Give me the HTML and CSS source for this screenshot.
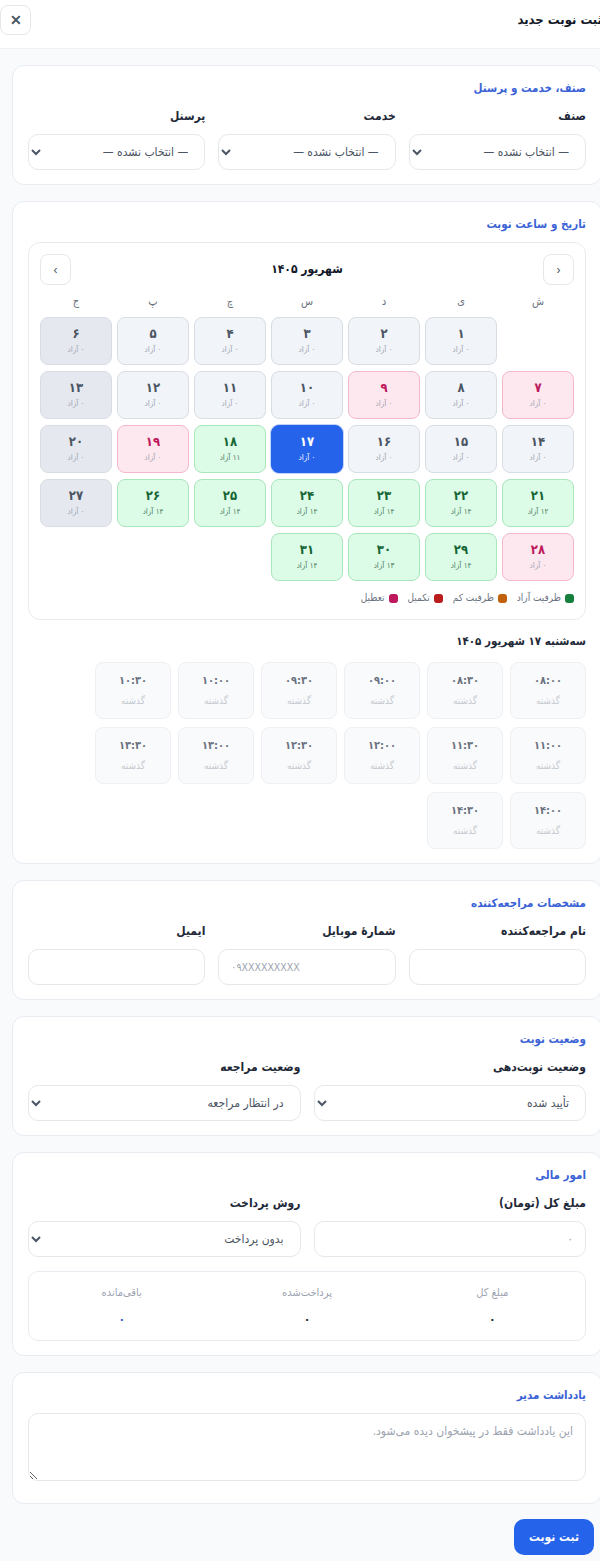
FILE: index.html
```html
<!DOCTYPE html>
<html lang="fa">
<head>
    <meta charset="UTF-8">
    <meta name="viewport" content="width=device-width, initial-scale=1.0">
    <title>ثبت نوبت جدید</title>
    <link rel="stylesheet" href="styles.css">
</head>
<body>
    <div class="modal" dir="rtl">
        <div class="modal-header">
            <div class="modal-title">ثبت نوبت جدید</div>
            <button class="close-btn">✕</button>
        </div>

        <div class="modal-body">
            <!-- category / service / staff -->
            <div class="card">
                <div class="card-title">صنف، خدمت و پرسنل</div>
                <div class="row row-3">
                    <div class="field">
                        <label class="field-label">صنف</label>
                        <select class="field-input"><option>— انتخاب نشده —</option></select>
                    </div>
                    <div class="field">
                        <label class="field-label">خدمت</label>
                        <select class="field-input"><option>— انتخاب نشده —</option></select>
                    </div>
                    <div class="field">
                        <label class="field-label">پرسنل</label>
                        <select class="field-input"><option>— انتخاب نشده —</option></select>
                    </div>
                </div>
            </div>

            <!-- date and time -->
            <div class="card">
                <div class="card-title">تاریخ و ساعت نوبت</div>
                <div class="calendar">
                    <div class="cal-nav">
                        <button class="nav-btn"><span dir="ltr">›</span></button>
                        <div class="cal-month">شهریور ۱۴۰۵</div>
                        <button class="nav-btn"><span dir="ltr">‹</span></button>
                    </div>
                    <div class="cal-grid" id="calGrid">
                        <div class="wd">ش</div>
                        <div class="wd">ی</div>
                        <div class="wd">د</div>
                        <div class="wd">س</div>
                        <div class="wd">چ</div>
                        <div class="wd">پ</div>
                        <div class="wd">ج</div>
                        <div class="day-empty"></div>
                    </div>
                    <div class="legend">
                        <span class="legend-item"><i class="dot dot-free"></i>ظرفیت آزاد</span>
                        <span class="legend-item"><i class="dot dot-low"></i>ظرفیت کم</span>
                        <span class="legend-item"><i class="dot dot-full"></i>تکمیل</span>
                        <span class="legend-item"><i class="dot dot-off"></i>تعطیل</span>
                    </div>
                </div>

                <div class="slots-title">سه‌شنبه ۱۷ شهریور ۱۴۰۵</div>
                <div class="slots" id="slots"></div>
            </div>

            <!-- customer -->
            <div class="card">
                <div class="card-title">مشخصات مراجعه‌کننده</div>
                <div class="row row-3">
                    <div class="field">
                        <label class="field-label">نام مراجعه‌کننده</label>
                        <input type="text" class="field-input">
                    </div>
                    <div class="field">
                        <label class="field-label">شمارهٔ موبایل</label>
                        <input type="text" class="field-input ltr" placeholder="۰۹XXXXXXXXX">
                    </div>
                    <div class="field">
                        <label class="field-label">ایمیل</label>
                        <input type="text" class="field-input">
                    </div>
                </div>
            </div>

            <!-- status -->
            <div class="card">
                <div class="card-title">وضعیت نوبت</div>
                <div class="row row-2">
                    <div class="field">
                        <label class="field-label">وضعیت نوبت‌دهی</label>
                        <select class="field-input"><option>تأیید شده</option></select>
                    </div>
                    <div class="field">
                        <label class="field-label">وضعیت مراجعه</label>
                        <select class="field-input"><option>در انتظار مراجعه</option></select>
                    </div>
                </div>
            </div>

            <!-- finance -->
            <div class="card">
                <div class="card-title">امور مالی</div>
                <div class="row row-2">
                    <div class="field">
                        <label class="field-label">مبلغ کل (تومان)</label>
                        <input type="text" class="field-input" placeholder="۰">
                    </div>
                    <div class="field">
                        <label class="field-label">روش پرداخت</label>
                        <select class="field-input"><option>بدون پرداخت</option></select>
                    </div>
                </div>
                <div class="summary">
                    <div class="sum-col">
                        <div class="sum-label">مبلغ کل</div>
                        <div class="sum-value">۰</div>
                    </div>
                    <div class="sum-col">
                        <div class="sum-label">پرداخت‌شده</div>
                        <div class="sum-value">۰</div>
                    </div>
                    <div class="sum-col">
                        <div class="sum-label">باقی‌مانده</div>
                        <div class="sum-value blue">۰</div>
                    </div>
                </div>
            </div>

            <!-- note -->
            <div class="card">
                <div class="card-title">یادداشت مدیر</div>
                <textarea class="note" placeholder="این یادداشت فقط در پیشخوان دیده می‌شود."></textarea>
            </div>
        </div>

        <div class="modal-footer">
            <button class="submit-btn">ثبت نوبت</button>
        </div>
    </div>

    <script>
        // status per day: g = gray, f = friday, p = holiday, s = selected, n = free
        var days = [
            ["g",0],["g",0],["g",0],["g",0],["g",0],["f",0],
            ["p",0],["g",0],["p",0],["g",0],["g",0],["g",0],["f",0],
            ["g",0],["g",0],["g",0],["s",0],["n",11],["p",0],["f",0],
            ["n",12],["n",14],["n",14],["n",14],["n",14],["n",14],["f",0],
            ["p",0],["n",14],["n",13],["n",14]
        ];
        var classes = { g: "day", f: "day day-fri", p: "day day-off", s: "day day-sel", n: "day day-free" };

        function toFa(n) {
            return String(n).replace(/\d/g, function (d) { return "۰۱۲۳۴۵۶۷۸۹"[d]; });
        }

        var grid = document.getElementById("calGrid");
        days.forEach(function (d, i) {
            var cell = document.createElement("div");
            cell.className = classes[d[0]];
            cell.innerHTML = '<div class="day-num">' + toFa(i + 1) + '</div>' +
                             '<div class="day-sub">' + toFa(d[1]) + ' آزاد</div>';
            grid.appendChild(cell);
        });

        var times = ["08:00","08:30","09:00","09:30","10:00","10:30","11:00","11:30",
                     "12:00","12:30","13:00","13:30","14:00","14:30"];
        var slots = document.getElementById("slots");
        times.forEach(function (t) {
            var s = document.createElement("div");
            s.className = "slot";
            s.innerHTML = '<div class="slot-time">' + toFa(t) + '</div><div class="slot-sub">گذشته</div>';
            slots.appendChild(s);
        });
    </script>
</body>
</html>
```

FILE: styles.css
```css
* {
    margin: 0;
    padding: 0;
    box-sizing: border-box;
}

html {
    direction: ltr;
}

body {
    background-color: #f8fafc;
    font-family: "DejaVu Sans", sans-serif;
    font-stretch: semi-condensed;
    line-height: 1.4;
    color: #1f2937;
    overflow-x: hidden;
}

.modal {
    width: 614px;
}

/* header */
.modal-header {
    display: flex;
    align-items: center;
    justify-content: space-between;
    padding: 5px 12px 13px 0;
    background-color: #ffffff;
    border-bottom: 1px solid #eef1f5;
}

.modal-title {
    font-size: 13px;
    font-weight: bold;
    color: #111827;
}

.close-btn {
    width: 31px;
    height: 30px;
    border: 1px solid #e5e7eb;
    border-radius: 8px;
    background: #ffffff;
    color: #4b5563;
    font-size: 14px;
    font-weight: bold;
    cursor: pointer;
}

.modal-body {
    padding: 16px 12px 0;
    display: flex;
    flex-direction: column;
    gap: 16px;
}

/* cards */
.card {
    background-color: #ffffff;
    border: 1px solid #e8ecf1;
    border-radius: 12px;
    padding: 14px 15px;
}

.card-title {
    font-size: 11.5px;
    line-height: 16px;
    font-weight: bold;
    color: #3b63d6;
    margin-bottom: 10px;
}

.row {
    display: grid;
    gap: 13px;
}

.row-3 {
    grid-template-columns: 1fr 1fr 1fr;
}

.row-2 {
    grid-template-columns: 1fr 1fr;
}

.field {
    display: flex;
    flex-direction: column;
    gap: 8px;
}

.field-label {
    font-size: 12px;
    line-height: 20px;
    font-weight: bold;
    color: #1f2937;
}

.field-input {
    height: 36px;
    width: 100%;
    padding: 0 12px;
    border: 1px solid #e5e7eb;
    border-radius: 10px;
    background-color: #ffffff;
    font-family: inherit;
    font-stretch: inherit;
    font-size: 12px;
    color: #4b5563;
}

.field-input::placeholder {
    color: #9ca3af;
}

.ltr {
    direction: ltr;
    text-align: left;
    font-size: 10.5px;
}

/* calendar */
.calendar {
    border: 1px solid #e8ecf1;
    border-radius: 12px;
    padding: 11px 11px 14px;
}

.cal-nav {
    display: flex;
    align-items: center;
    justify-content: space-between;
    margin-bottom: 7px;
}

.nav-btn {
    width: 31px;
    height: 31px;
    border: 1px solid #e5e7eb;
    border-radius: 8px;
    background: #ffffff;
    color: #4b5563;
    font-size: 12px;
}

.cal-month {
    font-size: 12px;
    font-weight: bold;
    color: #111827;
}

.cal-grid {
    display: grid;
    grid-template-columns: repeat(7, 1fr);
    gap: 6px 5px;
}

.wd {
    text-align: center;
    font-size: 11px;
    color: #6b7280;
    height: 19px;
    line-height: 19px;
}

.day {
    height: 48px;
    border: 1px solid #d8dde4;
    border-radius: 8px;
    background-color: #f1f4f8;
    display: flex;
    flex-direction: column;
    align-items: center;
    justify-content: center;
    gap: 4px;
    color: #4b5563;
}

.day-num {
    font-size: 13px;
    font-weight: bold;
    line-height: 14px;
}

.day-sub {
    font-size: 8px;
    color: #9ca3af;
    line-height: 10px;
}

.day-fri {
    background-color: #e5e9ef;
}

.day-off {
    background-color: #fde8ef;
    border-color: #f5b8cb;
    color: #be185d;
}

.day-free {
    background-color: #dcfce7;
    border-color: #a8e6bb;
    color: #166534;
}

.day-free .day-sub {
    color: #4b7a5d;
}

.day-sel {
    background-color: #2563eb;
    border-color: #2563eb;
    color: #ffffff;
    box-shadow: 0 0 0 1px #bfd3fb;
}

.day-sel .day-sub {
    color: #ffffff;
}

.legend {
    display: flex;
    gap: 10px;
    margin-top: 10px;
    font-size: 10px;
    line-height: 14px;
    color: #6b7280;
}

.legend-item {
    display: flex;
    align-items: center;
    gap: 4px;
}

.dot {
    display: inline-block;
    width: 9px;
    height: 9px;
    border-radius: 3px;
}

.dot-free { background-color: #15803d; }
.dot-low  { background-color: #c2610c; }
.dot-full { background-color: #b91c1c; }
.dot-off  { background-color: #be185d; }

/* time slots */
.slots-title {
    font-size: 11.5px;
    line-height: 18px;
    font-weight: bold;
    color: #1f2937;
    margin: 12px 0;
}

.slots {
    display: grid;
    grid-template-columns: repeat(6, 76px);
    gap: 8px 7px;
}

.slot {
    height: 57px;
    border: 1px solid #eef0f3;
    border-radius: 8px;
    background-color: #f9fafb;
    display: flex;
    flex-direction: column;
    align-items: center;
    justify-content: center;
    gap: 6px;
}

.slot-time {
    font-size: 11px;
    line-height: 14px;
    font-weight: bold;
    color: #6b7280;
}

.slot-sub {
    font-size: 10px;
    line-height: 14px;
    color: #c4c9d0;
}

/* finance summary */
.summary {
    display: grid;
    grid-template-columns: 1fr 1fr 1fr;
    margin-top: 14px;
    height: 70px;
    border: 1px solid #e8ecf1;
    border-radius: 10px;
    align-items: center;
}

.sum-col {
    text-align: center;
}

.sum-label {
    font-size: 11px;
    line-height: 16px;
    color: #9ca3af;
    margin-bottom: 10px;
}

.sum-value {
    font-size: 12px;
    line-height: 16px;
    font-weight: bold;
    color: #1f2937;
}

.sum-value.blue {
    color: #3b63d6;
}

/* note */
.note {
    display: block;
    width: 100%;
    height: 68px;
    margin-bottom: 8px;
    padding: 10px 12px;
    border: 1px solid #e5e7eb;
    border-radius: 10px;
    font-family: inherit;
    font-stretch: inherit;
    font-size: 12px;
    color: #374151;
}

.note::placeholder {
    color: #9ca3af;
}

/* footer */
.modal-footer {
    display: flex;
    padding: 15px 20px 8px;
}

.submit-btn {
    width: 80px;
    height: 36px;
    border: none;
    border-radius: 10px;
    background-color: #2563eb;
    color: #ffffff;
    font-family: inherit;
    font-stretch: inherit;
    font-size: 12px;
    font-weight: bold;
    cursor: pointer;
}
```
